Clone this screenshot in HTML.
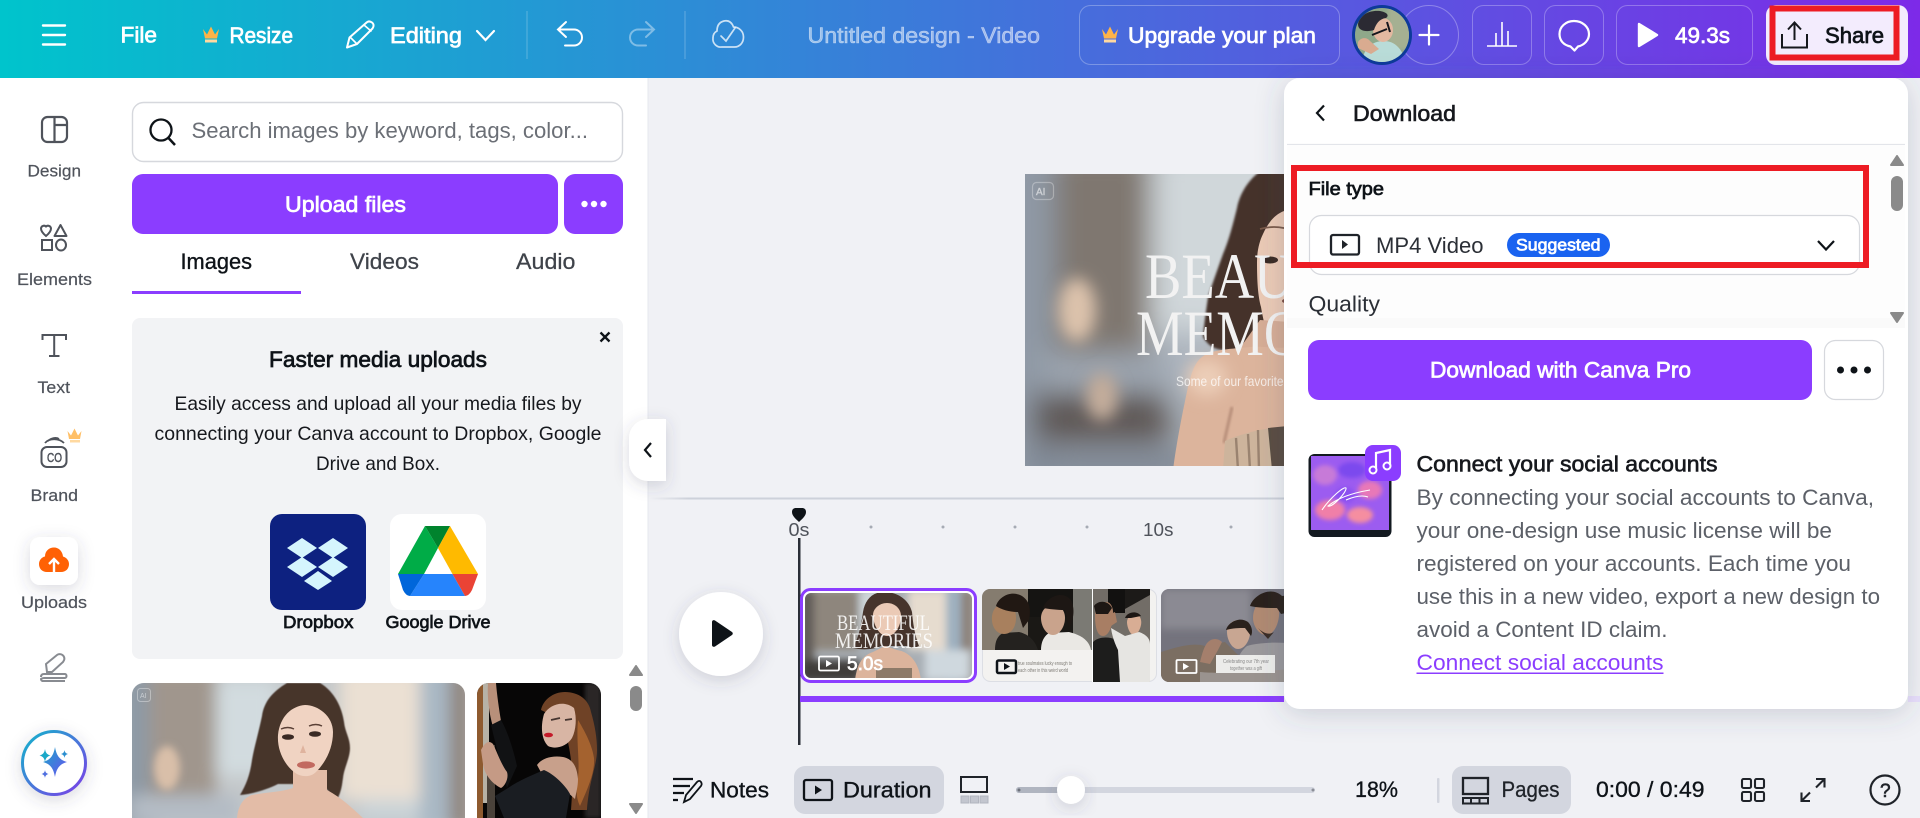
<!DOCTYPE html>
<html lang="en"><head><meta charset="utf-8"><title>Untitled design - Video</title>
<style>
html,body{margin:0;padding:0;background:#f0f1f5;width:1920px;height:818px;overflow:hidden}
svg{display:block}
text{font-family:"Liberation Sans",sans-serif}
.b{stroke-width:.7}
.w{fill:#fff;stroke:#fff}
.k{fill:#0e1318;stroke:#0e1318}
.m{stroke-width:.35}
</style></head><body>
<svg xmlns="http://www.w3.org/2000/svg" width="1920" height="818" viewBox="0 0 1920 818">
<defs>
<linearGradient id="hd" gradientUnits="userSpaceOnUse" x1="0" y1="0" x2="1920" y2="0"><stop offset="0" stop-color="#00c4cc"/><stop offset="1" stop-color="#7d2ae8"/></linearGradient>
<linearGradient id="ring" x1="0" y1="0" x2="1" y2="1"><stop offset="0" stop-color="#12b5cb"/><stop offset="1" stop-color="#7d3ce8"/></linearGradient>
<linearGradient id="star" x1="0" y1="0" x2="1" y2="1"><stop offset="0" stop-color="#1aa8c8"/><stop offset="1" stop-color="#6a4ff0"/></linearGradient>
<linearGradient id="sep" x1="0" y1="0" x2="1" y2="0"><stop offset="0" stop-color="#cdd1da" stop-opacity="0"/><stop offset=".06" stop-color="#cdd1da"/><stop offset="1" stop-color="#cdd1da"/></linearGradient>
<filter id="b14" x="-40%" y="-40%" width="180%" height="180%"><feGaussianBlur stdDeviation="14"/></filter>
<filter id="b8" x="-60%" y="-60%" width="220%" height="220%"><feGaussianBlur stdDeviation="8"/></filter>
<filter id="b4" x="-40%" y="-40%" width="180%" height="180%"><feGaussianBlur stdDeviation="4"/></filter>
<filter id="b2" x="-20%" y="-20%" width="140%" height="140%"><feGaussianBlur stdDeviation="2"/></filter>
<filter id="b1" x="-20%" y="-20%" width="140%" height="140%"><feGaussianBlur stdDeviation="1"/></filter>
<filter id="bh" x="-20%" y="-20%" width="140%" height="140%"><feGaussianBlur stdDeviation=".5"/></filter>
<filter id="sh" x="-20%" y="-20%" width="140%" height="140%"><feDropShadow dx="0" dy="4" stdDeviation="14" flood-color="#404a60" flood-opacity=".22"/></filter>
<filter id="sh2" x="-40%" y="-40%" width="180%" height="180%"><feDropShadow dx="0" dy="4" stdDeviation="8" flood-color="#404a60" flood-opacity=".2"/></filter>
<clipPath id="cMain"><rect x="1025" y="174" width="259" height="292"/></clipPath>
<clipPath id="cI1"><path d="M132 818V695a12 12 0 0 1 12-12H453a12 12 0 0 1 12 12V818Z"/></clipPath>
<clipPath id="cI2"><path d="M477 818V695a12 12 0 0 1 12-12H589a12 12 0 0 1 12 12V818Z"/></clipPath>
<clipPath id="cC1"><rect x="805" y="593" width="167" height="85" rx="6"/></clipPath>
<clipPath id="cC2"><rect x="982" y="589" width="175" height="93" rx="8"/></clipPath>
<clipPath id="cC3"><rect x="1161" y="589" width="140" height="93" rx="8"/></clipPath>
<clipPath id="cAv"><circle cx="1382" cy="35" r="27"/></clipPath>
<clipPath id="cTh"><rect x="1309" y="454" width="82" height="83" rx="5"/></clipPath>
</defs>

<!-- canvas background -->
<rect width="1920" height="818" fill="#f0f1f5"/>

<!-- header -->
<rect width="1920" height="78" fill="url(#hd)"/>
<g stroke="#fff" stroke-width="2.4" fill="none" stroke-linecap="round">
<path d="M43 25.5H65M43 35H65M43 44.5H65"/>
<path d="M347 47.5l2.5-10L366 23c2-2 4-2 6-.5s2 4 .5 6L357 44Z" stroke-width="2" stroke-linejoin="round"/><path d="M350 37l7 7M364 25l7 6" stroke-width="1.6"/>
<path d="M477 31l8.500 9 8.500-9" stroke-width="2.2"/>
<path d="M566 22l-8 7.500 8 7.500M558 29.500H574a8 8 0 0 1 0 16H565" stroke-width="2"/>
<path opacity=".4" d="M646 22l8 7.500-8 7.500M654 29.500H638a8 8 0 0 0 0 16h8" stroke-width="2"/>
<path opacity=".75" d="M722 47a8 8 0 0 1-9-9c0-4 2-6 4-7 0-6 3-9 7-10 5-1 8 2 9.500 6 5 0 10 4 10 10 0 6-4 10-9 10Z" stroke-width="1.700"/><path opacity=".75" d="M721 36l5 5 9-13" stroke-width="1.700"/>
</g>
<path d="M527 11V59M685 11V59" stroke="#fff" stroke-opacity=".22" stroke-width="1.200"/>
<path d="M203 29l4 5.500 4-8 4 8 4-5.500-2 9.500h-12Z" fill="#ffb347"/><rect x="205" y="39.500" width="12" height="3" fill="#ffd9a0"/>
<text x="120.500" y="42.500" font-size="22" class="b w" textLength="36.500" lengthAdjust="spacingAndGlyphs">File</text>
<text x="229.500" y="43" font-size="22" class="b w" textLength="63.500" lengthAdjust="spacingAndGlyphs">Resize</text>
<text x="390" y="43" font-size="22" class="b w" textLength="72" lengthAdjust="spacingAndGlyphs">Editing</text>
<text x="807.500" y="43" font-size="22" fill="#fff" fill-opacity=".5" stroke="#fff" stroke-opacity=".5" stroke-width=".6" textLength="232.500" lengthAdjust="spacingAndGlyphs">Untitled design - Video</text>

<rect x="1079.500" y="5.500" width="260" height="59" rx="11" fill="none" stroke="#fff" stroke-opacity=".28"/>
<path d="M1102 29l4 5.500 4-8 4 8 4-5.500-2 9.500h-12Z" fill="#ffb347"/><rect x="1104" y="39.500" width="12" height="3" fill="#ffd9a0"/>
<text x="1128" y="43" font-size="22" class="b w" textLength="188" lengthAdjust="spacingAndGlyphs">Upgrade your plan</text>

<circle cx="1429" cy="35" r="29.500" fill="none" stroke="#fff" stroke-opacity=".3"/>
<path d="M1419.500 35h19M1429 25.500v19" stroke="#fff" stroke-width="2.200" stroke-linecap="round"/>
<circle cx="1382" cy="35" r="30" fill="#0d3a9a"/>
<g clip-path="url(#cAv)">
<rect x="1350" y="5" width="64" height="60" fill="#8fa88a"/>
<rect x="1388" y="5" width="26" height="45" fill="#a5b092" filter="url(#b2)"/>
<path d="M1362 65c0-14 8-24 22-24 12 0 20 10 22 24Z" fill="#b9dcd8"/>
<ellipse cx="1383" cy="30" rx="10" ry="12" fill="#e3b8a0"/>
<path d="M1358 24c2-10 12-14 22-13 6 1 10 4 6 7-7 1-10 6-12 12-6 2-16 2-16-6Z" fill="#2b2a33"/>
<path d="M1358 42c3-5 9-5 12-1l9 8-8 5-13-6Z" fill="#d9ab90"/>
<path d="M1372 35l15-6M1387 22l3 10" stroke="#16161c" stroke-width="2" fill="none"/>
</g>

<rect x="1472.500" y="5.500" width="59" height="59" rx="11" fill="none" stroke="#fff" stroke-opacity=".28"/>
<path d="M1487 46h30M1496 46V33M1502 46V22M1508 46V31" stroke="#fff" stroke-width="1.600" fill="none"/>
<rect x="1544.500" y="5.500" width="59" height="59" rx="11" fill="none" stroke="#fff" stroke-opacity=".28"/>
<path d="M1570.500 46.500C1563 45 1559.500 40 1559.500 34c0-7 6-13 14.500-13s15 6 15 13c0 6-4.500 11-11 12.500l-3.500 4Z" fill="none" stroke="#fff" stroke-width="2.200" stroke-linejoin="round"/>
<rect x="1616.500" y="5.500" width="136" height="59" rx="11" fill="none" stroke="#fff" stroke-opacity=".28"/>
<path d="M1639 24L1657 35L1639 46Z" fill="#fff" stroke="#fff" stroke-width="2.400" stroke-linejoin="round"/>
<text x="1675" y="43" font-size="22" class="b w" textLength="55" lengthAdjust="spacingAndGlyphs">49.3s</text>

<rect x="1766" y="5" width="142" height="60" rx="10" fill="#f3ecfd"/>
<path d="M1782 34v13.500h25V34M1794.500 40V23M1788 29.500l6.500-7 6.500 7" fill="none" stroke="#16181d" stroke-width="2"/>
<text x="1825" y="43" font-size="22" class="b k" textLength="59" lengthAdjust="spacingAndGlyphs">Share</text>
<rect x="1772.500" y="8.500" width="124" height="49" fill="none" stroke="#ed1c24" stroke-width="6"/>

<!-- left rail + side panel -->
<rect x="0" y="78" width="648" height="740" fill="#fff"/>
<rect x="647.500" y="78" width="1" height="740" fill="#e6e8ee"/>

<g fill="none" stroke="#4f535b" stroke-width="2">
<rect x="42" y="117" width="25" height="25" rx="5.500" stroke-width="2.200"/><path d="M54.500 117v25M54.500 125H67" stroke-width="2.200"/>
<path d="M46 236c-3-2.500-5-5-5-7.500a3 3 0 0 1 5-2 3 3 0 0 1 5 2c0 2.500-2 5-5 7.500Z"/><path d="M60.500 225l6 11h-12Z" stroke-linejoin="round"/><rect x="42" y="240" width="10" height="10"/><ellipse cx="61" cy="245" rx="5" ry="5.500"/>
<path d="M42.500 340v-5H66v5M54.200 335v21M49 356h10.500" stroke-width="2"/>
<rect x="41.500" y="447" width="25" height="20" rx="5.500"/><path d="M45 443c4-5 14-5 19 0M48 441c3-3 8-4 11-2" stroke-width="1.800"/>
</g>
<text x="47" y="462" font-size="13" fill="#4f535b" stroke="#4f535b" stroke-width=".5" textLength="15" lengthAdjust="spacingAndGlyphs">CO</text>
<path d="M67.500 431l3.500 4.500 3.500-7 3.500 7 3.500-4.500-1.500 8h-11Z" fill="#ffbf66"/><rect x="70" y="440" width="10" height="2.500" fill="#ffd9a0"/>
<g font-size="17" fill="#4f535b" stroke="#4f535b" stroke-width=".2">
<text x="27.500" y="176.500" textLength="53.500" lengthAdjust="spacingAndGlyphs">Design</text>
<text x="17" y="285" textLength="75" lengthAdjust="spacingAndGlyphs">Elements</text>
<text x="37.500" y="393" textLength="32.500" lengthAdjust="spacingAndGlyphs">Text</text>
<text x="30.500" y="501" textLength="47.500" lengthAdjust="spacingAndGlyphs">Brand</text>
<text x="21" y="608" textLength="66" lengthAdjust="spacingAndGlyphs">Uploads</text>
</g>
<rect x="30" y="537" width="48" height="48" rx="10" fill="#fff" filter="url(#sh2)"/>
<path d="M47 572c-5 0-8-3.500-8-8 0-4 3-7 6-7.500 0-5.500 4-9 9-9s8.500 4 9 9c3.500 1 6 4 6 7.500 0 4.500-3 8-8 8Z" fill="#ff6105"/>
<path d="M54 572v-12M49 564l5-5 5 5" fill="none" stroke="#fff" stroke-width="2.400"/>
<path d="M47 672l-1-8 11-9c2-1.500 5-1 6.500 1s1 4-.5 6l-11 10Z" fill="none" stroke="#888b91" stroke-width="2"/><path d="M41 677c0-2 1-3 3-3h21c2 0 2 4 0 4H44c-2 0-3 1-3 1s0 2 2 2h22" fill="none" stroke="#888b91" stroke-width="2"/>
<circle cx="54" cy="763" r="31.500" fill="#fff" stroke="url(#ring)" stroke-width="3" filter="url(#sh2)"/>
<path d="M55 747c1.500 9 5 13 12 15-7 2-10.500 6-12 15-1.500-9-5-13-12-15 7-2 10.500-6 12-15Z" fill="url(#star)"/>
<path d="M45 749c.7 4 2 5.500 5.500 6.500-3.500 1-4.800 2.500-5.500 6.500-.7-4-2-5.500-5.500-6.500 3.500-1 4.800-2.500 5.500-6.500Z" fill="#1aa8c8"/>
<path d="M64.500 750c.4 2.500 1.500 3.500 3.500 4-2 .5-3.100 1.500-3.500 4-.4-2.500-1.500-3.500-3.500-4 2-.5 3.100-1.500 3.500-4Z" fill="#2b8fd0"/>
<path d="M45 770c.4 2.500 1.500 3.500 3.500 4-2 .5-3.100 1.500-3.500 4-.4-2.500-1.500-3.500-3.500-4 2-.5 3.100-1.500 3.500-4Z" fill="#4f6fe0"/>

<!-- search -->
<rect x="132.500" y="102.500" width="490" height="59" rx="11" fill="#fff" stroke="#d6d8dd" stroke-width="1.400"/>
<circle cx="161" cy="130" r="10.500" fill="none" stroke="#0e1318" stroke-width="2.300"/><path d="M168.500 138l6.500 7" stroke="#0e1318" stroke-width="2.500"/>
<text x="191.500" y="138" font-size="22" fill="#6b6f76" textLength="396.500" lengthAdjust="spacingAndGlyphs">Search images by keyword, tags, color...</text>
<rect x="132" y="174" width="426" height="60" rx="11" fill="#8b3dff"/>
<text x="285" y="212" font-size="22" class="b w" textLength="121" lengthAdjust="spacingAndGlyphs">Upload files</text>
<rect x="564" y="174" width="59" height="60" rx="11" fill="#8b3dff"/>
<circle cx="584.500" cy="204" r="3.200" fill="#fff"/><circle cx="594" cy="204" r="3.200" fill="#fff"/><circle cx="603.500" cy="204" r="3.200" fill="#fff"/>
<text x="180.500" y="269" font-size="22" class="k m" textLength="71.500" lengthAdjust="spacingAndGlyphs">Images</text>
<text x="350" y="269" font-size="22" fill="#3f434a" stroke="#3f434a" stroke-width=".25" textLength="69" lengthAdjust="spacingAndGlyphs">Videos</text>
<text x="516" y="269" font-size="22" fill="#3f434a" stroke="#3f434a" stroke-width=".25" textLength="59.500" lengthAdjust="spacingAndGlyphs">Audio</text>
<rect x="132" y="291" width="169" height="3" fill="#8b3dff"/>

<!-- promo card -->
<rect x="132" y="318" width="491" height="341" rx="8" fill="#f2f3f5"/>
<path d="M600.500 332.500l9 9M609.500 332.500l-9 9" stroke="#0e1318" stroke-width="2.300"/>
<text x="269" y="367" font-size="22" class="b k" textLength="218" lengthAdjust="spacingAndGlyphs">Faster media uploads</text>
<g font-size="19.500" fill="#16181d">
<text x="174.500" y="410" textLength="407" lengthAdjust="spacingAndGlyphs">Easily access and upload all your media files by</text>
<text x="154.500" y="440" textLength="447" lengthAdjust="spacingAndGlyphs">connecting your Canva account to Dropbox, Google</text>
<text x="316" y="470" textLength="124" lengthAdjust="spacingAndGlyphs">Drive and Box.</text>
</g>
<rect x="270" y="514" width="96" height="96" rx="12" fill="#0d2180"/>
<g fill="#d5f5fd"><path d="M302 538l15 10-15 10-15-10Z"/><path d="M333 538l15 10-15 10-15-10Z"/><path d="M302 557l15 10-15 10-15-10Z"/><path d="M333 557l15 10-15 10-15-10Z"/><path d="M318 571l14 10-14 9-14-9Z"/></g>
<rect x="390" y="514" width="96" height="96" rx="12" fill="#fff"/>
<path d="M425 526L438 548L424 574H398Z" fill="#00ac47"/>
<path d="M425 526H450L438 548Z" fill="#00832d"/>
<path d="M450 526L478 574H452.500L438 548Z" fill="#ffba00"/>
<path d="M424 574H452.500L465 596H410Z" fill="#2684fc"/>
<path d="M398 574H424L410 596Q406 596 403 590Z" fill="#0066da"/>
<path d="M452.500 574H478L472 590Q469 596 465 596Z" fill="#ea4335"/>
<text x="283" y="628" font-size="17.500" class="b k" textLength="70.500" lengthAdjust="spacingAndGlyphs">Dropbox</text>
<text x="385.500" y="628" font-size="17.500" class="b k" textLength="105" lengthAdjust="spacingAndGlyphs">Google Drive</text>

<!-- gallery scrollbar -->
<path d="M636 666l6 9h-12Z" fill="#8a8a8a" stroke="#8a8a8a" stroke-linejoin="round" stroke-width="2"/>
<rect x="630" y="686" width="12" height="25" rx="6" fill="#8a8a8a"/>
<path d="M636 813l6-9h-12Z" fill="#8a8a8a" stroke="#8a8a8a" stroke-linejoin="round" stroke-width="2"/>

<!-- gallery image 1 -->
<g clip-path="url(#cI1)">
<rect x="132" y="683" width="333" height="135" fill="#c4c8ca"/>
<g filter="url(#b8)">
<rect x="120" y="670" width="34" height="160" fill="#8e9aa5"/>
<rect x="150" y="670" width="66" height="125" fill="#a0968d"/>
<rect x="216" y="680" width="60" height="95" fill="#d2dbdf"/>
<rect x="340" y="670" width="85" height="130" fill="#ebe0d3"/>
<rect x="420" y="670" width="30" height="160" fill="#a9b8c4"/>
<rect x="450" y="670" width="20" height="160" fill="#8d8178"/>
<rect x="130" y="795" width="110" height="30" fill="#b4bcc5"/>
<rect x="360" y="800" width="60" height="20" fill="#c9d3d8"/>
</g>
<ellipse cx="167" cy="768" rx="13" ry="22" fill="#d9bfa9" filter="url(#b4)"/>
<path d="M287 683C272 692 264 702 262 716C258 735 254 748 252 760C250 775 246 785 240 795C252 794 266 790 278 784L322 784C328 790 332 796 337 800C342 790 342 784 343 778C344 768 350 758 350 748C350 738 345 732 344 722C342 708 335 692 320 683Z" fill="#46342c" filter="url(#bh)"/>
<path d="M237 818C238 806 243 798 252 795C268 792 282 792 293 788L293 770L327 770L327 790C342 798 352 808 363 818Z" fill="#e3bca7"/>
<path d="M305 705C292 706 280 716 278 735C277 750 284 764 294 772C300 777 310 778 316 772C326 762 333 748 333 732C333 716 318 705 305 705Z" fill="#f0d3c2"/>
<ellipse cx="288" cy="737" rx="6" ry="2.800" fill="#3a2a24"/><ellipse cx="315" cy="734" rx="6" ry="2.800" fill="#3a2a24"/>
<path d="M281 729q7-3 13 0M309 726q7-3 13 0" stroke="#5a4036" stroke-width="1.400" fill="none"/>
<path d="M303 745l-3 8h6Z" fill="#dfb39e"/>
<ellipse cx="306" cy="765" rx="9" ry="3.600" fill="#c26a60"/>
</g>
<rect x="137.500" y="688.500" width="13" height="13" rx="3" fill="none" stroke="#fff" stroke-opacity=".35"/>
<text x="140" y="698" font-size="7" fill="#fff" fill-opacity=".5">AI</text>

<!-- gallery image 2 -->
<g clip-path="url(#cI2)">
<rect x="477" y="683" width="124" height="135" fill="#070606"/>
<rect x="477" y="683" width="6" height="135" fill="#8e5a2f"/>
<rect x="483" y="683" width="6" height="120" fill="#b7b2a6"/>
<rect x="487" y="745" width="8" height="73" fill="#4a423a"/>
<rect x="585" y="683" width="16" height="135" fill="#2c2826" filter="url(#b2)"/>
<path d="M488 683h8c1 12 3 26 5 38l-8 6c-4-14-6-30-5-44Z" fill="#b8907a"/>
<path d="M491 725l10-5c6 10 12 28 16 46l-10 22-8-30Z" fill="#111214"/>
<path d="M481 750c4-8 8-10 12-6 4 8 8 20 14 28 2 6-2 14-6 16-8-4-16-12-18-24Z" fill="#c59a85"/>
<path d="M541 710c2-10 12-18 24-18 14 0 24 8 26 20 4 14 6 26 6 38 0 16-8 30-10 60h-16l2-30c-2-24-4-40-12-60Z" fill="#6f4226"/>
<path d="M578 720c6 10 14 24 16 38 1 14-6 30-14 48-4-8-4-16-2-28 2-18-2-36 0-58Z" fill="#a4622f"/>
<path d="M544 714c6-10 20-14 30-6 3 10 2 22-2 30-5 8-16 12-24 8-6-6-8-18-4-32Z" fill="#d8b5a4"/>
<path d="M551 720l9-2M565 720l7-1" stroke="#463530" stroke-width="1.800"/>
<ellipse cx="548.500" cy="735" rx="4.500" ry="2.300" fill="#c41a2a"/>
<path d="M537 765c4-6 14-10 26-8 10 2 14 10 15 22 0 8-2 14-3 20l-20-18-12-5Z" fill="#c8a08b"/>
<path d="M508 788c12-8 22-12 36-18 10 4 22 16 26 24l-4 24h-62l-9-22Z" fill="#1a1d22"/>
</g>

<!-- collapse tab -->
<path d="M666 419h-18a19 19 0 0 0-19 19v24a19 19 0 0 0 19 19h18Z" fill="#fff" filter="url(#sh2)"/>
<path d="M651 443l-6 7 6 7" fill="none" stroke="#0e1318" stroke-width="2.200"/>

<!-- main canvas image -->
<g clip-path="url(#cMain)">
<rect x="1025" y="174" width="259" height="292" fill="#a3aab2"/>
<g filter="url(#b14)">
<rect x="1000" y="150" width="55" height="340" fill="#8f99a5"/>
<rect x="1055" y="150" width="95" height="215" fill="#7f776f"/>
<rect x="1152" y="150" width="140" height="190" fill="#d0d7da"/>
<rect x="1160" y="330" width="50" height="70" fill="#aeb6bf"/>
<rect x="1033" y="393" width="135" height="50" fill="#5e5957"/>
<rect x="1045" y="352" width="125" height="36" fill="#9ca5b0"/>
<rect x="1025" y="450" width="170" height="30" fill="#7e8794"/>
</g>
<ellipse cx="1077" cy="310" rx="19" ry="32" fill="#dcc2ac" filter="url(#b8)"/>
<ellipse cx="1102" cy="397" rx="16" ry="24" fill="#c4ad9b" filter="url(#b8)"/>
<path d="M1290 170h-28c-12 8-22 22-25 38-4 16-8 32-14 46-5 14-10 28-15 43-2 14-4 28-5 40 5 8 10 12 20 13l60 10 20-10Z" fill="#453229" filter="url(#b1)"/>
<path d="M1284 211c-10 4-16 12-21 23-4 8-6 18-6 28 0 20 1 34 4 45 2 12 5 24 8 33l21 4Z" fill="#ebcab6"/>
<path d="M1260 229q14-4 28 0" stroke="#7a5a4a" stroke-width="1.800" fill="none"/>
<ellipse cx="1270" cy="260" rx="8" ry="3.500" fill="#3a2a24"/>
<ellipse cx="1285" cy="301" rx="3" ry="2" fill="#7a4a40"/>
<path d="M1260 320l30 2v40h-60Z" fill="#d6ad96"/>
<path d="M1173 470c4-30 10-60 15-83 3-12 6-24 14-30 10-8 30-8 48-10 14-1 28 2 40 0v123Z" fill="#dcb49c"/>
<ellipse cx="1207" cy="378" rx="20" ry="18" fill="#ecceb8" filter="url(#b8)"/>
<path d="M1232 407c-3 14-6 26-8 36" stroke="#b88f7a" stroke-width="3" fill="none" filter="url(#b1)"/>
<path d="M1225 441c18-8 40-13 63-15v44h-65Z" fill="#cdb49c"/>
<path d="M1268 428l20-2v44h-16Z" fill="#5a4c42"/>
<path d="M1236 438l2 32M1248 434l2 36M1258 430l1 40" stroke="#9a8370" stroke-width="2.400"/>
</g>
<rect x="1032.500" y="182.500" width="21" height="17" rx="4" fill="none" stroke="#fff" stroke-opacity=".3" stroke-width="1.200"/>
<text x="1036" y="195" font-size="10" fill="#fff" fill-opacity=".5" stroke="#fff" stroke-opacity=".4" stroke-width=".4">AI</text>
<g clip-path="url(#cMain)">
<text x="1145" y="298" font-size="65" fill="#f2f2f2" style="font-family:'Liberation Serif',serif" textLength="200" lengthAdjust="spacingAndGlyphs">BEAUTI</text>
<text x="1136" y="355" font-size="65" fill="#f2f2f2" style="font-family:'Liberation Serif',serif" textLength="220" lengthAdjust="spacingAndGlyphs">MEMORI</text>
<text x="1176" y="386" font-size="14" fill="#fff" fill-opacity=".75" textLength="160" lengthAdjust="spacingAndGlyphs">Some of our favorite moments</text>
</g>

<!-- timeline -->
<rect x="650" y="497.500" width="634" height="2" fill="url(#sep)"/>
<path d="M799 522c-3-3-7-6-7-10 0-3 2-4 4-4h6c2 0 4 1 4 4 0 4-4 7-7 10Z" fill="#0e1318"/>
<text x="788.500" y="536" font-size="18" fill="#4f535b" textLength="21" lengthAdjust="spacingAndGlyphs">0s</text>
<text x="1143" y="536" font-size="18" fill="#4f535b" textLength="30.500" lengthAdjust="spacingAndGlyphs">10s</text>
<g fill="#a6abb4"><circle cx="871" cy="527" r="1.500"/><circle cx="943" cy="527" r="1.500"/><circle cx="1015" cy="527" r="1.500"/><circle cx="1087" cy="527" r="1.500"/><circle cx="1231" cy="527" r="1.500"/></g>
<rect x="798" y="538" width="2.500" height="207" fill="#2a2e37"/>
<circle cx="721" cy="634" r="42" fill="#fff" filter="url(#sh2)"/>
<path d="M712 622c0-1.500 1.500-2.300 3-1.500l17 11.500c1 .8 1 2.300 0 3l-17 11.500c-1.500.8-3 0-3-1.500Z" fill="#0e1318"/>
<rect x="800" y="696" width="484" height="6" fill="#8b3dff"/>
<rect x="1908" y="696" width="12" height="6" fill="#e8defc"/>

<!-- clip 1 -->
<rect x="801.500" y="589.500" width="174" height="92" rx="9" fill="#fff" stroke="#8b3dff" stroke-width="3"/>
<g clip-path="url(#cC1)">
<rect x="805" y="593" width="167" height="85" fill="#a8aeb4"/>
<g filter="url(#b4)"><rect x="800" y="590" width="14" height="92" fill="#5e5a56"/><rect x="814" y="590" width="44" height="60" fill="#8e867d"/><rect x="860" y="590" width="20" height="50" fill="#cfd7da"/><rect x="908" y="590" width="38" height="60" fill="#e6dccf"/><rect x="946" y="590" width="15" height="92" fill="#9eb0c0"/><rect x="961" y="590" width="12" height="92" fill="#8d8178"/><rect x="800" y="660" width="60" height="22" fill="#413d3b"/><rect x="925" y="650" width="45" height="30" fill="#cfd8de"/></g>
<path d="M884 592c-12 0-19 8-21 20-2 14-4 24-10 36 8 2 20 2 28-2h26c6 2 8 2 12 0-4-10-6-22-7-34-3-12-14-20-28-20Z" fill="#46342c"/>
<path d="M873 615c0-6 6-12 14-12s14 6 14 13c0 10-6 20-14 20s-14-12-14-21Z" fill="#ebcab6"/>
<path d="M855 680c2-14 6-24 18-28l12-6 12 4c14 2 22 14 24 30Z" fill="#dcb49c"/>
<path d="M876 668h36v12h-36Z" fill="#8d7a68"/>
</g>
<g fill="#fff" fill-opacity=".88" font-size="22">
<text x="837" y="630" style="font-family:'Liberation Serif',serif" textLength="93" lengthAdjust="spacingAndGlyphs">BEAUTIFUL</text>
<text x="835" y="648" style="font-family:'Liberation Serif',serif" textLength="98" lengthAdjust="spacingAndGlyphs">MEMORIES</text>
</g>
<rect x="819" y="656.500" width="20" height="14" rx="1.500" fill="none" stroke="#fff" stroke-width="1.800"/><path d="M826 660l6 3.500-6 3.500Z" fill="#fff"/>
<text x="847" y="670" font-size="19" class="b w" textLength="36" lengthAdjust="spacingAndGlyphs">5.0s</text>

<!-- clip 2 -->
<rect x="982.500" y="589.500" width="174" height="92" rx="8" fill="#f3f2f0" stroke="#dcdee4"/>
<g clip-path="url(#cC2)">
<rect x="982" y="589" width="110" height="61" fill="#857c6f"/>
<rect x="1028" y="589" width="45" height="28" fill="#151412"/>
<rect x="1073" y="589" width="19" height="61" fill="#7b7a74"/>
<rect x="1028" y="617" width="45" height="33" fill="#1a1815"/>
<path d="M995 650c0-8 2-14 8-17l16-1c9 2 16 8 19 18Z" fill="#24221f"/>
<path d="M992 616c1-8 6-12 12-12 8 0 12 6 12 14s-4 16-12 16-13-8-12-18Z" fill="#a8805e"/>
<path d="M996 606c3-10 16-16 26-10 8 5 9 14 7 24l-6 8-5-16c-8 0-16-2-22-6Z" fill="#211813"/>
<path d="M1041 650c0-8 3-14 8-17l20-1c12 3 20 8 22 18Z" fill="#eae8e4"/>
<path d="M1041 618c0-8 6-13 12-13 7 0 12 5 12 13s-5 17-12 17-12-9-12-17Z" fill="#c9a38c"/>
<path d="M1043 608c4-12 20-18 28-8 4 8 3 20-2 28l-4-18c-8 0-16-1-22-2Z" fill="#1d1714"/>
<rect x="1092" y="589" width="1" height="93" fill="#fff"/>
<rect x="1093" y="589" width="57" height="93" fill="#726d67"/>
<rect x="1108" y="589" width="17" height="24" fill="#121110"/>
<path d="M1125 589h25v6l-25 14Z" fill="#1c1a18"/>
<path d="M1093 682v-40c5-5 15-6 24-2l8 8v34Z" fill="#1d1d1c"/>
<path d="M1095 616c0-8 6-14 11-14 6 0 8 8 7 16-1 10-5 18-10 18-6 0-8-10-8-20Z" fill="#a87e64"/>
<path d="M1094 606c4-6 14-6 18 2l-4 6h-12Z" fill="#1d1714"/>
<path d="M1127 622c0-5 5-8 8-8 5 0 7 6 6 11s-4 10-7 10c-4 0-7-8-7-13Z" fill="#d8ad94"/>
<path d="M1125 618c2-6 12-8 16-2l-10 2Z" fill="#1d1714"/>
<path d="M1111 628l14 8 14-4c6 2 11 6 11 12v38h-30l-2-32c-3-6-6-14-7-22Z" fill="#e6e5e2"/>
<path d="M1107 616l8-4 2 10-6 4Z" fill="#a87e64"/>
</g>
<rect x="997" y="660.500" width="19" height="12.500" rx="1.500" fill="#f3f2f0" stroke="#0e1318" stroke-width="2.500"/><path d="M1004 663l6 3.500-6 3.500Z" fill="#0e1318"/>
<text x="1018" y="665" font-size="5" fill="#7d7a74" textLength="54" lengthAdjust="spacingAndGlyphs">true soulmates lucky enough to</text>
<text x="1018" y="672" font-size="5" fill="#7d7a74" textLength="50" lengthAdjust="spacingAndGlyphs">each other in this weird world</text>

<!-- clip 3 -->
<g clip-path="url(#cC3)">
<rect x="1161" y="589" width="140" height="93" fill="#74737d"/>
<rect x="1161" y="589" width="90" height="40" fill="#8b8a93" filter="url(#b4)"/>
<path d="M1161 682v-30c14-4 30-10 44-6l20-4 40 40Z" fill="#7b6e62"/>
<path d="M1235 682c0-16 2-28 12-36 14-4 32-4 54-2v38Z" fill="#9b999c"/>
<path d="M1200 672c20 2 60 0 101-4v14h-101Z" fill="#9a938f"/>
<path d="M1253 618c0-12 8-20 15-20s12 8 11 18-6 19-13 19-13-9-13-17Z" fill="#b08a72"/>
<path d="M1250 606c4-12 22-20 32-10l19-2v16l-20 4-4-6c-8 0-18 0-27-2Z" fill="#2a211c"/>
<path d="M1258 628c4 4 10 8 16 4l-6 7Z" fill="#3b2d26"/>
<path d="M1227 632c0-8 6-12 12-12s12 6 11 14-6 15-12 15-11-9-11-17Z" fill="#c8a692"/>
<path d="M1226 630c2-8 14-14 22-8 4 4 5 10 3 14l-6-8c-6 0-12 0-19 2Z" fill="#2a211c"/>
<path d="M1200 662c2-8 4-16 8-20 4-4 10-4 14 0l-4 8-8 14Z" fill="#a47f6c"/>
</g>
<rect x="1216" y="655" width="59" height="18" fill="#ececea"/>
<text x="1223" y="663" font-size="5" fill="#888" textLength="46" lengthAdjust="spacingAndGlyphs">Celebrating our 7th year</text>
<text x="1230" y="670" font-size="5" fill="#888" textLength="32" lengthAdjust="spacingAndGlyphs">together was a gift</text>
<rect x="1176.500" y="660" width="20" height="13" rx="1" fill="none" stroke="#fff" stroke-width="1.800"/><path d="M1183 663l6 3.500-6 3.500Z" fill="#fff"/>

<!-- bottom bar -->
<path d="M673 779h20M673 786h17M673 793h11M673 800h5" stroke="#0e1318" stroke-width="2.200" fill="none"/>
<path d="M684 802l2-7 11-13c1.500-1.500 3-1.500 4 0s1 2.500 0 4l-11 13Z" fill="#f0f1f5" stroke="#0e1318" stroke-width="1.800"/>
<text x="710" y="797.500" font-size="22" class="k m" textLength="59" lengthAdjust="spacingAndGlyphs">Notes</text>
<rect x="794" y="766" width="150" height="48" rx="11" fill="#d3d6df"/>
<rect x="804" y="780" width="28" height="20" rx="2" fill="none" stroke="#0e1318" stroke-width="2.300"/><path d="M815 785.500l7 4.500-7 4.500Z" fill="#0e1318"/>
<text x="843" y="797.500" font-size="22" class="k m" textLength="88.500" lengthAdjust="spacingAndGlyphs">Duration</text>
<rect x="961" y="777" width="26" height="15" fill="none" stroke="#1f2329" stroke-width="2"/>
<g fill="#c3c6cf" stroke="#b2b5bf"><rect x="961" y="796" width="8" height="7"/><rect x="970.500" y="796" width="8" height="7"/><rect x="980" y="796" width="8" height="7"/></g>
<rect x="1016" y="787" width="299" height="6" rx="3" fill="#d3d6df"/>
<rect x="1016" y="787" width="55" height="6" rx="3" fill="#b0b5c0"/>
<circle cx="1019" cy="790" r="1.500" fill="#6d717b"/><circle cx="1313" cy="790" r="1.500" fill="#8b8e97"/>
<circle cx="1071" cy="790" r="14" fill="#fff" filter="url(#sh2)"/>
<text x="1355" y="797" font-size="22" class="k m" textLength="43" lengthAdjust="spacingAndGlyphs">18%</text>
<rect x="1437" y="778" width="2.500" height="25" rx="1" fill="#d3d6df"/>
<rect x="1452" y="766" width="119" height="48" rx="11" fill="#d3d6df"/>
<rect x="1463" y="778" width="25" height="16" fill="none" stroke="#1f2329" stroke-width="2.300"/>
<g fill="none" stroke="#1f2329" stroke-width="2"><rect x="1463" y="798" width="25" height="5.500"/><path d="M1471 798v5.500M1479.500 798v5.500"/></g>
<text x="1501.500" y="797" font-size="22" fill="#1f2329" stroke="#1f2329" stroke-width=".3" textLength="58" lengthAdjust="spacingAndGlyphs">Pages</text>
<text x="1596" y="797" font-size="22" class="k m" textLength="108.500" lengthAdjust="spacingAndGlyphs">0:00 / 0:49</text>
<g fill="none" stroke="#1f2329" stroke-width="2.100">
<rect x="1742" y="779" width="9" height="9" rx="1.500"/><rect x="1755" y="779" width="9" height="9" rx="1.500"/><rect x="1742" y="792" width="9" height="9" rx="1.500"/><rect x="1755" y="792" width="9" height="9" rx="1.500"/>
<path d="M1816 779h8.500v8.500M1824 779.500l-8 8M1810 801h-8.500v-8.500M1802 800.500l8-8"/>
</g>
<circle cx="1885" cy="790" r="14.500" fill="none" stroke="#1f2329" stroke-width="2.200"/>
<text x="1880" y="797" font-size="19" fill="#1f2329" stroke="#1f2329" stroke-width=".6">?</text>

<!-- download panel -->
<path d="M1284 94a16 16 0 0 1 16-16h592a16 16 0 0 1 16 16V693a16 16 0 0 1-16 16H1300a16 16 0 0 1-16-16Z" fill="#fff" filter="url(#sh)"/>
<path d="M1324 105.500l-7 7.500 7 7.500" fill="none" stroke="#0e1318" stroke-width="2.200"/>
<text x="1353" y="121" font-size="22" fill="#16181d" stroke="#16181d" stroke-width=".6" textLength="103" lengthAdjust="spacingAndGlyphs">Download</text>
<path d="M1287 144.500H1905" stroke="#e3e5ea" stroke-width="1.200"/>
<rect x="1287" y="145" width="618" height="183" fill="#fdfdfd"/>
<rect x="1287" y="318" width="618" height="10" fill="#fafafa"/>
<path d="M1897 156l6 9h-12Z" fill="#8a8a8a" stroke="#8a8a8a" stroke-linejoin="round" stroke-width="2"/>
<rect x="1891" y="176" width="12" height="35" rx="6" fill="#8a8a8a"/>
<path d="M1897 322l6-9h-12Z" fill="#8a8a8a" stroke="#8a8a8a" stroke-linejoin="round" stroke-width="2"/>
<text x="1308.500" y="195" font-size="18.500" class="b k" textLength="75.500" lengthAdjust="spacingAndGlyphs">File type</text>
<rect x="1309.500" y="215.500" width="550" height="59" rx="12" fill="#fff" stroke="#d6d8dd" stroke-width="1.200"/>
<rect x="1331" y="235" width="28" height="19.500" rx="2" fill="none" stroke="#1f2329" stroke-width="2.300"/><path d="M1342 240l6 4.500-6 4.500Z" fill="#1f2329"/>
<text x="1376" y="253" font-size="22" fill="#2b2f36" textLength="107.500" lengthAdjust="spacingAndGlyphs">MP4 Video</text>
<rect x="1507" y="233" width="103" height="24" rx="12" fill="#1a63f0"/>
<text x="1516" y="250.500" font-size="16.500" class="b w" textLength="84.500" lengthAdjust="spacingAndGlyphs">Suggested</text>
<path d="M1818 241l8 8.500 8-8.500" fill="none" stroke="#0e1318" stroke-width="2.200"/>
<rect x="1294" y="168" width="572" height="97" fill="none" stroke="#ed1c24" stroke-width="6"/>
<text x="1308.500" y="311.500" font-size="22" fill="#2b2f36" textLength="71.500" lengthAdjust="spacingAndGlyphs">Quality</text>
<rect x="1308" y="340" width="504" height="60" rx="11" fill="#8b3dff"/>
<text x="1430" y="377.500" font-size="22" class="b w" textLength="261" lengthAdjust="spacingAndGlyphs">Download with Canva Pro</text>
<rect x="1824.500" y="340.500" width="59" height="59" rx="11" fill="#fff" stroke="#d6d8dd" stroke-width="1.200"/>
<circle cx="1840.500" cy="370" r="3.500" fill="#0e1318"/><circle cx="1854" cy="370" r="3.500" fill="#0e1318"/><circle cx="1867.500" cy="370" r="3.500" fill="#0e1318"/>

<rect x="1308.500" y="454" width="83" height="83" rx="6" fill="#131a20"/>
<g clip-path="url(#cTh)">
<rect x="1311" y="456" width="78" height="74" fill="#9c5cf0"/>
<g filter="url(#b2)"><ellipse cx="1325" cy="475" rx="12" ry="10" fill="#c77ad8"/><ellipse cx="1352" cy="470" rx="14" ry="8" fill="#7c48ee"/><ellipse cx="1370" cy="490" rx="12" ry="9" fill="#e878b8"/><ellipse cx="1330" cy="510" rx="15" ry="10" fill="#f07fa8"/><ellipse cx="1360" cy="515" rx="13" ry="8" fill="#f58ea0"/><ellipse cx="1345" cy="495" rx="10" ry="8" fill="#8b50f0"/></g>
<path d="M1322 510c8-12 22-24 24-22 1 4-14 20-18 18 12-10 30-14 42-16M1346 500q14-6 22-3" fill="none" stroke="#fff" stroke-width="1.100"/>
</g>
<rect x="1365" y="445" width="36" height="36" rx="8" fill="#8b3dff"/>
<path d="M1376 468V453l14-3v15" fill="none" stroke="#fff" stroke-width="2.200"/><circle cx="1373" cy="470" r="3.500" fill="none" stroke="#fff" stroke-width="2"/><circle cx="1387" cy="466" r="3.500" fill="none" stroke="#fff" stroke-width="2"/>

<text x="1416.500" y="471.500" font-size="22" fill="#16181d" stroke="#16181d" stroke-width=".6" textLength="301" lengthAdjust="spacingAndGlyphs">Connect your social accounts</text>
<g font-size="22" fill="#5c6068">
<text x="1416.500" y="505" textLength="457.500" lengthAdjust="spacingAndGlyphs">By connecting your social accounts to Canva,</text>
<text x="1416.500" y="538" textLength="415.500" lengthAdjust="spacingAndGlyphs">your one-design use music license will be</text>
<text x="1416.500" y="571" textLength="434.500" lengthAdjust="spacingAndGlyphs">registered on your accounts. Each time you</text>
<text x="1416.500" y="604" textLength="463.500" lengthAdjust="spacingAndGlyphs">use this in a new video, export a new design to</text>
<text x="1416.500" y="637" textLength="251" lengthAdjust="spacingAndGlyphs">avoid a Content ID claim.</text>
</g>
<text x="1416.500" y="670" font-size="22" fill="#8b3dff" textLength="247" lengthAdjust="spacingAndGlyphs">Connect social accounts</text>
<rect x="1416.500" y="672.500" width="247" height="1.500" fill="#8b3dff"/>
</svg>
</body></html>
